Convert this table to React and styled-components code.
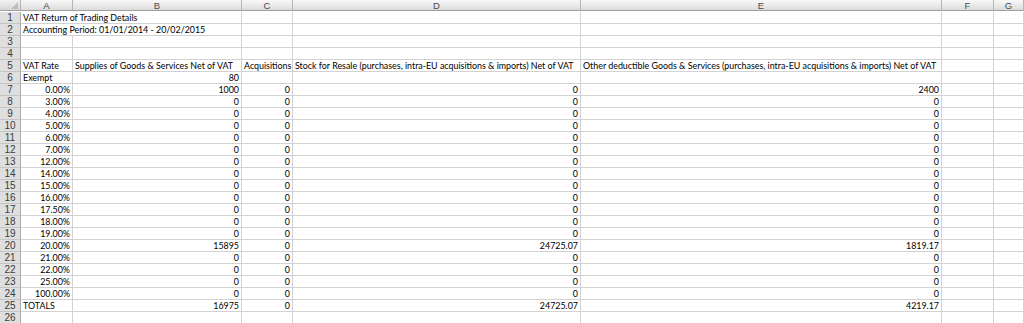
import React from 'react';
import styled, { createGlobalStyle } from 'styled-components';

const GlobalStyle = createGlobalStyle`
    html, body {
        margin: 0;
        padding: 0;
        background: #ffffff;
        overflow: hidden;
    }
`;

const COLS = ['A', 'B', 'C', 'D', 'E', 'F', 'G'];

const Sheet = styled.div`
    display: grid;
    grid-template-columns: 21px 52px 169px 51px 288px 361px 52px 1fr;
    grid-auto-rows: 12px;
    width: 1024px;
    height: 323px;
    overflow: hidden;
    font-family: Lato, "Liberation Sans", sans-serif;
    font-size: 8.9px;
    color: #000;
    background: #fff;
`;

const Corner = styled.div`
    height: 11px;
    box-sizing: border-box;
    background: linear-gradient(#f4f4f4, #d6d6d6);
    border-right: 1px solid #b3b3b3;
    border-bottom: 1px solid #9f9f9f;
    position: relative;
    &::after {
        content: '';
        position: absolute;
        right: 2px;
        bottom: 1px;
        border-left: 7px solid transparent;
        border-bottom: 7px solid #bdbdbd;
    }
`;

const ColHead = styled.div`
    height: 11px;
    box-sizing: border-box;
    background: linear-gradient(#f8f8f8, #dcdcdc);
    border-right: 1px solid #b5b5b5;
    border-bottom: 1px solid #a0a0a0;
    color: #4a4a4a;
    font-family: "Liberation Sans", Arial, sans-serif;
    font-size: 9.5px;
    line-height: 11px;
    text-align: center;
`;

const RowHead = styled.div`
    box-sizing: border-box;
    background: #dfdfdf;
    border-right: 1px solid #aaaaaa;
    border-bottom: 1px solid #c4c4c4;
    color: #3c3c3c;
    font-family: "Liberation Sans", Arial, sans-serif;
    font-size: 10px;
    line-height: 11px;
    text-align: center;
`;

const Cell = styled.div`
    box-sizing: border-box;
    grid-column: span ${(p) => p.$span || 1};
    border-right: 1px solid #d2d2d2;
    border-bottom: 1px solid #d2d2d2;
    padding: 0 2px;
    line-height: 11px;
    white-space: nowrap;
    overflow: hidden;
    text-align: ${(p) => (p.$num ? 'right' : 'left')};
`;

const rates = [
    ['0.00%', 1000, 0, 0, 2400],
    ['3.00%', 0, 0, 0, 0],
    ['4.00%', 0, 0, 0, 0],
    ['5.00%', 0, 0, 0, 0],
    ['6.00%', 0, 0, 0, 0],
    ['7.00%', 0, 0, 0, 0],
    ['12.00%', 0, 0, 0, 0],
    ['14.00%', 0, 0, 0, 0],
    ['15.00%', 0, 0, 0, 0],
    ['16.00%', 0, 0, 0, 0],
    ['17.50%', 0, 0, 0, 0],
    ['18.00%', 0, 0, 0, 0],
    ['19.00%', 0, 0, 0, 0],
    ['20.00%', 15895, 0, '24725.07', '1819.17'],
    ['21.00%', 0, 0, 0, 0],
    ['22.00%', 0, 0, 0, 0],
    ['25.00%', 0, 0, 0, 0],
    ['100.00%', 0, 0, 0, 0],
];

const blank = [{}, {}, {}, {}, {}, {}, {}];

// each row: list of cells { v, num, span }
const rows = [
    [{ v: 'VAT Return of Trading Details', span: 2 }, {}, {}, {}, {}, {}],
    [{ v: 'Accounting Period: 01/01/2014 - 20/02/2015', span: 2 }, {}, {}, {}, {}, {}],
    blank,
    blank,
    [
        { v: 'VAT Rate' },
        { v: 'Supplies of Goods & Services Net of VAT' },
        { v: 'Acquisitions' },
        { v: 'Stock for Resale (purchases, intra-EU acquisitions & imports) Net of VAT' },
        { v: 'Other deductible Goods & Services (purchases, intra-EU acquisitions & imports) Net of VAT' },
        {},
        {},
    ],
    [{ v: 'Exempt' }, { v: 80, num: true }, {}, {}, {}, {}, {}],
    ...rates.map((r) => [
        { v: r[0], num: true },
        { v: r[1], num: true },
        { v: r[2], num: true },
        { v: r[3], num: true },
        { v: r[4], num: true },
        {},
        {},
    ]),
    [
        { v: 'TOTALS' },
        { v: 16975, num: true },
        { v: 0, num: true },
        { v: '24725.07', num: true },
        { v: '4219.17', num: true },
        {},
        {},
    ],
    blank,
];

const App = () => {
    return (
        <>
            <GlobalStyle />
            <Sheet>
                <Corner />
                {COLS.map((c) => (
                    <ColHead key={c}>{c}</ColHead>
                ))}
                {rows.map((row, i) => (
                    <React.Fragment key={i}>
                        <RowHead>{i + 1}</RowHead>
                        {row.map((cell, j) => (
                            <Cell key={j} $num={cell.num} $span={cell.span}>
                                {cell.v}
                            </Cell>
                        ))}
                    </React.Fragment>
                ))}
            </Sheet>
        </>
    );
};

export default App;
